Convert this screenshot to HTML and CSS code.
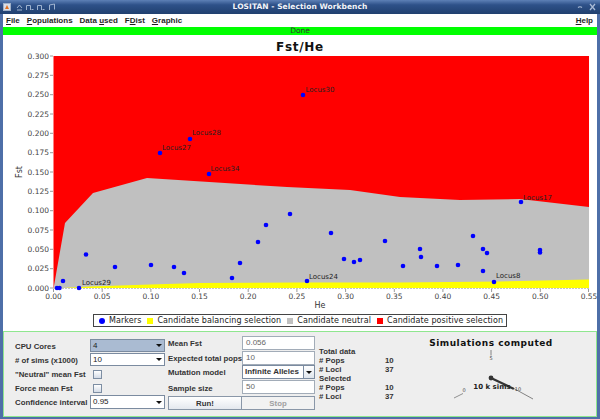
FILE: index.html
```html
<!DOCTYPE html>
<html>
<head>
<meta charset="utf-8">
<link rel="stylesheet" href="styles.css">
</head>
<body>
<div class="window">
  <div class="titlebar">
    <div class="tb-icons">
      <svg width="60" height="14" viewBox="0 0 60 14">
        <rect x="3.5" y="3.5" width="7" height="7" fill="#d8dde8" stroke="#9fb0c8"/>
        <path d="M5 9 L7 5 L9 9 Z" fill="#e07020"/>
        <path d="M17 8 L19.5 5 L22 8 M17 10 H22" stroke="#9fb3cf" fill="none"/>
        <path d="M26.5 10 V5.5 H30.5 V10 M31.5 9.5 H33.5" stroke="#9fb3cf" fill="none"/>
        <path d="M37.5 10 V5.5 H41.5 V10 M42.5 9.5 H44.5" stroke="#9fb3cf" fill="none"/>
        <path d="M49.5 10 V5 L54.5 4 V9.5" stroke="#9fb3cf" fill="none"/>
      </svg>
    </div>
    <div class="tb-title">LOSITAN - Selection Workbench</div>
    <div class="tb-controls">
      <svg width="24" height="14" viewBox="0 0 24 14">
        <path d="M4 7.5 Q6 6 8 7.5" stroke="#a9bbd6" fill="none" stroke-width="1.2"/>
        <path d="M16 4 L21 10 M21 4 L16 10" stroke="#a9bbd6" stroke-width="1.3"/>
      </svg>
    </div>
  </div>
  <div class="frame">
    <div class="menubar">
      <span class="menu"><u>F</u>ile</span>
      <span class="menu"><u>P</u>opulations</span>
      <span class="menu">Data <u>u</u>sed</span>
      <span class="menu">F<u>D</u>ist</span>
      <span class="menu"><u>G</u>raphic</span>
      <span class="spacer"></span>
      <span class="menu"><u>H</u>elp</span>
    </div>
    <div class="status">Done</div>
    <div class="chart">
      <svg class="plot" width="594" height="278" viewBox="3 35 594 278">
        <text class="ctitle" x="300" y="50.5" text-anchor="middle">Fst/He</text>
        <rect x="53.5" y="56" width="535.5" height="232" fill="#ff0000"/>
        <polygon fill="#c0c0c0" points="53.5,288 54.5,283 65,223 93,193 147,178 287,187 350,190 400,197 460,200 520,199 589,207 589,288"/>
        <polygon fill="#ffff00" points="62,288 90,286.5 150,284.5 200,283 300,282.5 400,282.5 500,281.5 589,279.5 589,288"/>
        <line x1="53.5" y1="288.5" x2="589" y2="288.5" stroke="#8a8a8a" stroke-dasharray="1 2"/>
        <g class="ticks" stroke="#9a9a9a">
          <line x1="50" y1="288" x2="53" y2="288"/><line x1="50" y1="268.7" x2="53" y2="268.7"/>
          <line x1="50" y1="249.3" x2="53" y2="249.3"/><line x1="50" y1="230" x2="53" y2="230"/>
          <line x1="50" y1="210.7" x2="53" y2="210.7"/><line x1="50" y1="191.3" x2="53" y2="191.3"/>
          <line x1="50" y1="172" x2="53" y2="172"/><line x1="50" y1="152.7" x2="53" y2="152.7"/>
          <line x1="50" y1="133.3" x2="53" y2="133.3"/><line x1="50" y1="114" x2="53" y2="114"/>
          <line x1="50" y1="94.7" x2="53" y2="94.7"/><line x1="50" y1="75.3" x2="53" y2="75.3"/>
          <line x1="50" y1="56" x2="53" y2="56"/>
          <line x1="53.5" y1="289" x2="53.5" y2="292"/><line x1="102.2" y1="289" x2="102.2" y2="292"/>
          <line x1="150.9" y1="289" x2="150.9" y2="292"/><line x1="199.5" y1="289" x2="199.5" y2="292"/>
          <line x1="248.2" y1="289" x2="248.2" y2="292"/><line x1="296.9" y1="289" x2="296.9" y2="292"/>
          <line x1="345.6" y1="289" x2="345.6" y2="292"/><line x1="394.3" y1="289" x2="394.3" y2="292"/>
          <line x1="442.9" y1="289" x2="442.9" y2="292"/><line x1="491.6" y1="289" x2="491.6" y2="292"/>
          <line x1="540.3" y1="289" x2="540.3" y2="292"/><line x1="588.5" y1="289" x2="588.5" y2="292"/>
        </g>
        <g class="ylab" text-anchor="end">
          <text x="49" y="290.7">0.000</text><text x="49" y="271.4">0.025</text>
          <text x="49" y="252">0.050</text><text x="49" y="232.7">0.075</text>
          <text x="49" y="213.4">0.100</text><text x="49" y="194">0.125</text>
          <text x="49" y="174.7">0.150</text><text x="49" y="155.4">0.175</text>
          <text x="49" y="136">0.200</text><text x="49" y="116.7">0.225</text>
          <text x="49" y="97.4">0.250</text><text x="49" y="78">0.275</text>
          <text x="49" y="58.7">0.300</text>
        </g>
        <g class="xlab" text-anchor="middle">
          <text x="53.5" y="298.5">0.00</text><text x="102.2" y="298.5">0.05</text>
          <text x="150.9" y="298.5">0.10</text><text x="199.5" y="298.5">0.15</text>
          <text x="248.2" y="298.5">0.20</text><text x="296.9" y="298.5">0.25</text>
          <text x="345.6" y="298.5">0.30</text><text x="394.3" y="298.5">0.35</text>
          <text x="442.9" y="298.5">0.40</text><text x="491.6" y="298.5">0.45</text>
          <text x="540.3" y="298.5">0.50</text><text x="589" y="298.5">0.55</text>
        </g>
        <text class="alab" x="320" y="307.5" text-anchor="middle">He</text>
        <text class="alab" transform="translate(22 172) rotate(-90)" text-anchor="middle">Fst</text>
        <g fill="#0000ff">
          <circle cx="57" cy="288" r="2.3"/><circle cx="59.5" cy="288" r="2.3"/>
          <circle cx="63" cy="281" r="2.3"/><circle cx="79" cy="288" r="2.3"/>
          <circle cx="86" cy="254.5" r="2.3"/><circle cx="115" cy="267" r="2.3"/>
          <circle cx="151" cy="265" r="2.3"/><circle cx="160" cy="153" r="2.3"/>
          <circle cx="174" cy="267" r="2.3"/><circle cx="184" cy="273" r="2.3"/>
          <circle cx="190" cy="139" r="2.3"/><circle cx="209" cy="174" r="2.3"/>
          <circle cx="232" cy="278" r="2.3"/><circle cx="240" cy="263" r="2.3"/>
          <circle cx="258" cy="242" r="2.3"/><circle cx="266" cy="225" r="2.3"/>
          <circle cx="290" cy="214" r="2.3"/><circle cx="303" cy="95" r="2.3"/>
          <circle cx="307" cy="281" r="2.3"/><circle cx="331" cy="233" r="2.3"/>
          <circle cx="344" cy="259" r="2.3"/><circle cx="354" cy="262" r="2.3"/>
          <circle cx="360" cy="260" r="2.3"/><circle cx="385" cy="241" r="2.3"/>
          <circle cx="403" cy="266" r="2.3"/><circle cx="420" cy="249" r="2.3"/>
          <circle cx="421" cy="257" r="2.3"/><circle cx="437" cy="266" r="2.3"/>
          <circle cx="458" cy="265" r="2.3"/><circle cx="473" cy="236" r="2.3"/>
          <circle cx="483" cy="249" r="2.3"/><circle cx="487" cy="253" r="2.3"/>
          <circle cx="483" cy="271" r="2.3"/><circle cx="494" cy="282" r="2.3"/>
          <circle cx="521" cy="202" r="2.3"/><circle cx="540" cy="250" r="2.3"/>
          <circle cx="540" cy="252.5" r="2.3"/>
        </g>
        <g class="plab">
          <text x="305.5" y="91.5">Locus30</text>
          <text x="192" y="135">Locus28</text>
          <text x="162" y="150">Locus27</text>
          <text x="210.5" y="171">Locus34</text>
          <text x="523" y="200">Locus17</text>
          <text x="82" y="284.5">Locus29</text>
          <text x="309" y="278.5">Locus24</text>
          <text x="496" y="278">Locus8</text>
        </g>
      </svg>
      <div class="legend-row">
        <div class="legend">
          <span class="item"><i class="sw dot blue"></i>Markers</span>
          <span class="item"><i class="sw yellow"></i>Candidate balancing selection</span>
          <span class="item"><i class="sw gray"></i>Candidate neutral</span>
          <span class="item"><i class="sw red"></i>Candidate positive selection</span>
        </div>
      </div>
    </div>
    <div class="panel">
      <div class="col-a">
        <span class="lbl">CPU Cores</span>
        <div class="combo sel"><span class="val">4</span><span class="abtn"><i class="tri"></i></span></div>
        <span class="lbl"># of sims (x1000)</span>
        <div class="combo"><span class="val">10</span><span class="abtn"><i class="tri"></i></span></div>
        <span class="lbl">"Neutral" mean Fst</span>
        <div class="check"></div>
        <span class="lbl">Force mean Fst</span>
        <div class="check"></div>
        <span class="lbl">Confidence interval</span>
        <div class="combo tall"><span class="val">0.95</span><span class="abtn"><i class="tri"></i></span></div>
      </div>
      <div class="col-b">
        <span class="lbl">Mean Fst</span>
        <div class="field">0.056</div>
        <span class="lbl">Expected total pops</span>
        <div class="field">10</div>
        <span class="lbl">Mutation model</span>
        <div class="combo model"><span class="val">Infinite Alleles</span><span class="abtn"><i class="tri"></i></span></div>
        <span class="lbl">Sample size</span>
        <div class="field">50</div>
        <button class="btn">Run!</button>
        <button class="btn off">Stop</button>
      </div>
      <div class="col-c">
        <span class="lbl full">Total data</span>
        <span class="lbl"># Pops</span><span class="lbl">10</span>
        <span class="lbl"># Loci</span><span class="lbl">37</span>
        <span class="lbl full">Selected</span>
        <span class="lbl"># Pops</span><span class="lbl">10</span>
        <span class="lbl"># Loci</span><span class="lbl">37</span>
      </div>
      <div class="gauge">
        <svg width="201" height="84" viewBox="395 332 201 84">
          <text class="gtitle" x="491" y="346" text-anchor="middle">Simulations computed</text>
          <line x1="491" y1="350" x2="491" y2="355.5" stroke="#666" stroke-width="0.8"/>
          <text class="gsmall" x="491" y="360" text-anchor="middle">5</text>
          <line x1="454" y1="398" x2="463" y2="393.5" stroke="#777" stroke-width="0.8"/>
          <text class="gsmall" x="464" y="391.5" text-anchor="middle">0</text>
          <line x1="513" y1="388" x2="533" y2="399" stroke="#666" stroke-width="0.8"/>
          <text class="gsmall" x="518" y="391" text-anchor="middle">10</text>
          <line x1="491" y1="378" x2="513" y2="388.5" stroke="#333" stroke-width="2.2" stroke-linecap="round"/>
          <circle cx="491" cy="378" r="2.4" fill="#333"/>
          <text class="gunit" x="492" y="388.5" text-anchor="middle">10 k sims</text>
        </svg>
      </div>
    </div>
  </div>
</div>
</body>
</html>
```

FILE: styles.css
```css
html, body {
  margin: 0;
  padding: 0;
  background: #ffffff;
}

.window {
  width: 600px;
  height: 419px;
  display: flex;
  flex-direction: column;
  overflow: hidden;
  font-family: "Liberation Sans", Arial, sans-serif;
}

/* ---------- title bar ---------- */
.titlebar {
  height: 14px;
  flex: none;
  display: grid;
  grid-template-columns: 1fr auto 1fr;
  align-items: center;
  background: linear-gradient(#5d80b6 0%, #2e5189 35%, #20406f 100%);
}

.tb-icons svg,
.tb-controls svg {
  display: block;
}

.tb-controls {
  justify-self: end;
  padding-right: 2px;
}

.tb-title {
  color: #f2f4f8;
  font: bold 7.5px/14px "DejaVu Sans", sans-serif;
  letter-spacing: 0.05px;
  white-space: nowrap;
}

/* ---------- frame ---------- */
.frame {
  flex: 1;
  display: flex;
  flex-direction: column;
  border-left: 3px solid #4e6fa8;
  border-right: 3px solid #4e6fa8;
  border-bottom: 2px solid #4e6fa8;
  min-height: 0;
}

.menubar {
  height: 13px;
  flex: none;
  display: flex;
  align-items: center;
  gap: 7px;
  padding: 0 4px 0 3px;
  background: #ffffff;
  font: bold 8px "Liberation Sans", Arial, sans-serif;
  color: #1e1e1e;
}

.menu u {
  text-decoration-thickness: 1px;
  text-underline-offset: 1px;
}

.spacer {
  flex: 1;
}

.status {
  height: 8px;
  flex: none;
  background: #00ff00;
  text-align: center;
  font: 7.5px/8px "DejaVu Sans", sans-serif;
  color: #333333;
}

/* ---------- chart ---------- */
.chart {
  height: 296px;
  flex: none;
  display: flex;
  flex-direction: column;
  background: #ffffff;
}

.plot {
  display: block;
}

.ctitle {
  font: bold 12px "DejaVu Sans", sans-serif;
  letter-spacing: 0.7px;
  fill: #111111;
}

.ylab text,
.xlab text {
  font: 7.5px "DejaVu Sans", sans-serif;
  fill: #444444;
}

.alab {
  font: 8px "DejaVu Sans", sans-serif;
  fill: #333333;
}

.plab text {
  font: 7px "DejaVu Sans", sans-serif;
  fill: #222222;
}

.legend-row {
  display: flex;
  justify-content: center;
  padding-top: 1px;
}

.legend {
  height: 13px;
  box-sizing: border-box;
  display: flex;
  align-items: center;
  gap: 6px;
  padding: 0 3px 0 5px;
  border: 1px solid #444444;
  font: 8px "DejaVu Sans", sans-serif;
  letter-spacing: 0.1px;
  color: #222222;
  white-space: nowrap;
}

.item {
  display: flex;
  align-items: center;
  gap: 4px;
}

.sw {
  display: block;
  width: 6px;
  height: 6px;
}

.dot {
  border-radius: 50%;
}

.blue { background: #0000ff; }
.yellow { background: #ffff00; }
.gray { background: #c0c0c0; }
.red { background: #ff0000; }

/* ---------- control panel ---------- */
.panel {
  height: 86px;
  flex: none;
  box-sizing: border-box;
  display: flex;
  padding-left: 11px;
  border: 1px solid #8fe68f;
  background: #eeeeee;
}

.lbl {
  font: bold 7.8px "Liberation Sans", Arial, sans-serif;
  color: #333333;
  white-space: nowrap;
}

.col-a {
  display: grid;
  grid-template-columns: 75px 75px;
  grid-template-rows: repeat(5, 14px);
  align-items: center;
  padding-top: 7px;
}

.combo {
  height: 13px;
  box-sizing: border-box;
  display: flex;
  border: 1px solid #7b8ba0;
  background: #ffffff;
  align-self: start;
}

.combo.tall {
  height: 14px;
}

.combo.sel {
  background: #aabbd2;
}

.combo .val {
  flex: 1;
  padding-left: 2px;
  font: 8px/11px "Liberation Sans", Arial, sans-serif;
  color: #222222;
}

.combo.tall .val {
  line-height: 12px;
}

.abtn {
  width: 10px;
  display: flex;
  align-items: center;
  justify-content: center;
}

.tri {
  display: block;
  width: 0;
  height: 0;
  border-left: 3px solid transparent;
  border-right: 3px solid transparent;
  border-top: 3.5px solid #111111;
}

.combo.model {
  height: 14px;
}

.combo.model .val {
  font-weight: bold;
  line-height: 12px;
  color: #333333;
}

.combo.model .abtn {
  border-left: 1px solid #7b8ba0;
  background: linear-gradient(#ffffff, #dfe5ec);
}

.check {
  width: 7px;
  height: 7px;
  margin-left: 3px;
  border: 1px solid #7d8ea3;
  background: linear-gradient(#ffffff, #d3dbe6);
}

.col-b {
  display: grid;
  grid-template-columns: 74px 73px;
  grid-template-rows: 15px 14px 15px 16px 14px;
  align-items: center;
  margin-left: 3px;
  padding-top: 4px;
}

.field {
  height: 14px;
  box-sizing: border-box;
  align-self: start;
  padding-left: 3px;
  border: 1px solid #a2acb8;
  background: #ffffff;
  font: 8px/12px "Liberation Sans", Arial, sans-serif;
  color: #666666;
}

.btn {
  height: 14px;
  margin: 0;
  padding: 0;
  box-sizing: border-box;
  border: 1px solid #8a97a8;
  background: linear-gradient(#ffffff, #e4e8ee);
  font: bold 7.8px "Liberation Sans", Arial, sans-serif;
  color: #333333;
}

.btn.off {
  border-left: none;
  color: #a0a0a0;
  background: #f2f2f2;
}

.col-c {
  width: 76px;
  display: grid;
  grid-template-columns: 66px 10px;
  grid-auto-rows: 9px;
  align-content: start;
  align-items: center;
  margin-left: 4px;
  padding-top: 15px;
}

.col-c .full {
  grid-column: 1 / 3;
}

.gauge {
  flex: 1;
}

.gauge svg {
  display: block;
}

.gtitle {
  font: bold 9px "DejaVu Sans", sans-serif;
  letter-spacing: 0.5px;
  fill: #111111;
}

.gsmall {
  font: 5px "DejaVu Sans", sans-serif;
  fill: #444444;
}

.gunit {
  font: bold 7px "DejaVu Sans", sans-serif;
  fill: #222222;
}
```
